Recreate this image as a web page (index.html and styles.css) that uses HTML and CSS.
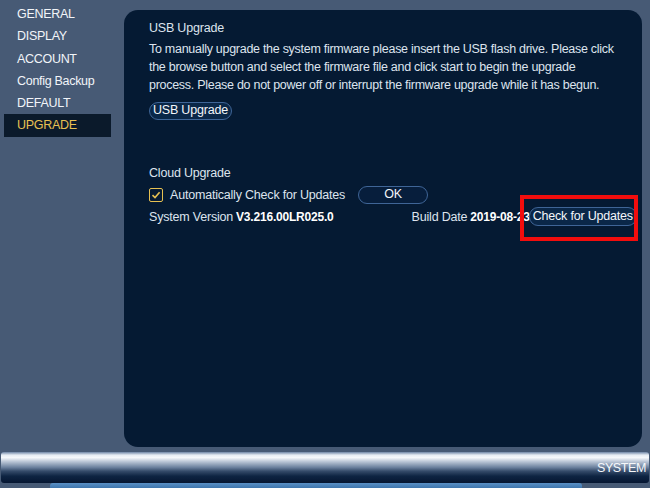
FILE: index.html
```html
<!DOCTYPE html>
<html lang="en">
<head>
    <meta charset="UTF-8">
    <title>System - Upgrade</title>
    <link rel="stylesheet" href="styles.css">
</head>
<body>
    <div class="screen">
        <div class="main">
            <ul class="sidebar">
                <li>GENERAL</li>
                <li>DISPLAY</li>
                <li>ACCOUNT</li>
                <li>Config Backup</li>
                <li>DEFAULT</li>
                <li class="active">UPGRADE</li>
            </ul>

            <div class="panel">
                <section class="usb">
                    <h2>USB Upgrade</h2>
                    <p>To manually upgrade the system firmware please insert the USB flash drive. Please click the browse button and select the firmware file and click start to begin the upgrade process. Please do not power off or interrupt the firmware upgrade while it has begun.</p>
                    <button class="pill">USB Upgrade</button>
                </section>

                <section class="cloud">
                    <h2>Cloud Upgrade</h2>
                    <div class="row">
                        <label class="check">
                            <span class="box">
                                <svg width="10" height="10" viewBox="0 0 10 10"><path d="M1.5 5.2 L4 7.6 L8.6 2.2" fill="none" stroke="#e6c052" stroke-width="1.6"/></svg>
                            </span>
                            Automatically Check for Updates
                        </label>
                        <button class="pill ok">OK</button>
                    </div>
                    <div class="row version">
                        <span class="label">System Version</span>
                        <span class="value">V3.216.00LR025.0</span>
                        <span class="label build">Build Date</span>
                        <span class="value">2019-08-23</span>
                        <span class="highlight">
                            <button class="pill check-btn">Check for Updates</button>
                        </span>
                    </div>
                </section>
            </div>
        </div>

        <div class="taskbar">
            <span class="title">SYSTEM</span>
        </div>
        <div class="strip"></div>
    </div>
</body>
</html>
```

FILE: styles.css
```css
:root {
    --slate: #475a75;
    --navy: #051a33;
    --text: #dde4ee;
    --gold: #e6c052;
    --pill-border: #3f6597;
}

body {
    margin: 0;
    background: var(--slate);
    font-family: 'Liberation Sans', Arial, sans-serif;
    color: var(--text);
}

.screen {
    width: 650px;
    height: 488px;
    display: flex;
    flex-direction: column;
    overflow: hidden;
}

.main {
    display: flex;
    flex: 1;
    min-height: 0;
}

.sidebar {
    list-style: none;
    margin: 0;
    padding: 3px 0 0 4px;
    width: 120px;
    flex-shrink: 0;
}

.sidebar li {
    height: 22.3px;
    line-height: 22px;
    padding-left: 13px;
    font-size: 12.5px;
    letter-spacing: -0.3px;
    color: #f2f5f9;
    width: 94px;
}

.sidebar li.active {
    background: #0b1a2b;
    color: var(--gold);
}

.panel {
    flex: 1;
    min-width: 0;
    margin: 10px 8px 5px 0;
    background: var(--navy);
    border-radius: 14px;
    padding: 11px 23px 0 25px;
}

h2 {
    margin: 0;
    font-size: 12.5px;
    font-weight: normal;
    letter-spacing: -0.2px;
}

.usb p {
    margin: 5px 0 6px;
    font-size: 12.5px;
    line-height: 18px;
    letter-spacing: -0.28px;
}

.pill {
    font-family: inherit;
    font-size: 12.5px;
    letter-spacing: -0.2px;
    color: #f4f6fa;
    background: #0a2748;
    border: 1px solid var(--pill-border);
    border-radius: 9px;
    padding: 0 3px;
    height: 18px;
    line-height: 15px;
    white-space: nowrap;
}

.cloud {
    margin-top: 46px;
}

.row {
    display: flex;
    align-items: center;
    white-space: nowrap;
}

.cloud .row:first-of-type {
    margin-top: 6px;
}

.check {
    display: flex;
    align-items: center;
    font-size: 12.5px;
    letter-spacing: -0.2px;
    width: 209px;
}

.box {
    width: 12px;
    height: 12px;
    border: 1px solid var(--gold);
    border-radius: 2px;
    margin-right: 7px;
    display: flex;
    align-items: center;
    justify-content: center;
}

.ok {
    width: 70px;
    height: 18px;
    background: #071e3c;
}

.version {
    margin-top: 4px;
    font-size: 12.5px;
    letter-spacing: -0.2px;
}

.version .value {
    color: #ffffff;
    font-weight: bold;
    font-size: 12px;
    margin-left: 3px;
}

.version .build {
    margin-left: 78px;
}

.highlight {
    position: relative;
    margin-left: -1px;
    margin-top: -1px;
}

.highlight::after {
    content: "";
    position: absolute;
    left: -9px;
    top: -12px;
    width: 110px;
    height: 38px;
    border: 4px solid #f20d0d;
}

.check-btn {
    padding: 0 3px;
    height: 19px;
}

.taskbar {
    height: 31px;
    margin: 0 1px;
    border-radius: 3px;
    background: linear-gradient(to bottom,
        #6f86a6 0%, #e8edf4 10%, #f6f8fb 18%, #b6c2d3 32%, #6a7f9c 50%,
        #344a69 62%, #0e2442 78%, #061631 100%);
    display: flex;
    justify-content: flex-end;
    align-items: center;
    padding-right: 3px;
}

.taskbar .title {
    font-size: 12.5px;
    letter-spacing: -0.4px;
    color: #f5f7fa;
    padding-top: 1px;
}

.strip {
    height: 5px;
    margin: 0 68px 0 50px;
    background: linear-gradient(to bottom, #5a90c6, #3f76ad);
    border-radius: 3px 3px 0 0;
}
```
